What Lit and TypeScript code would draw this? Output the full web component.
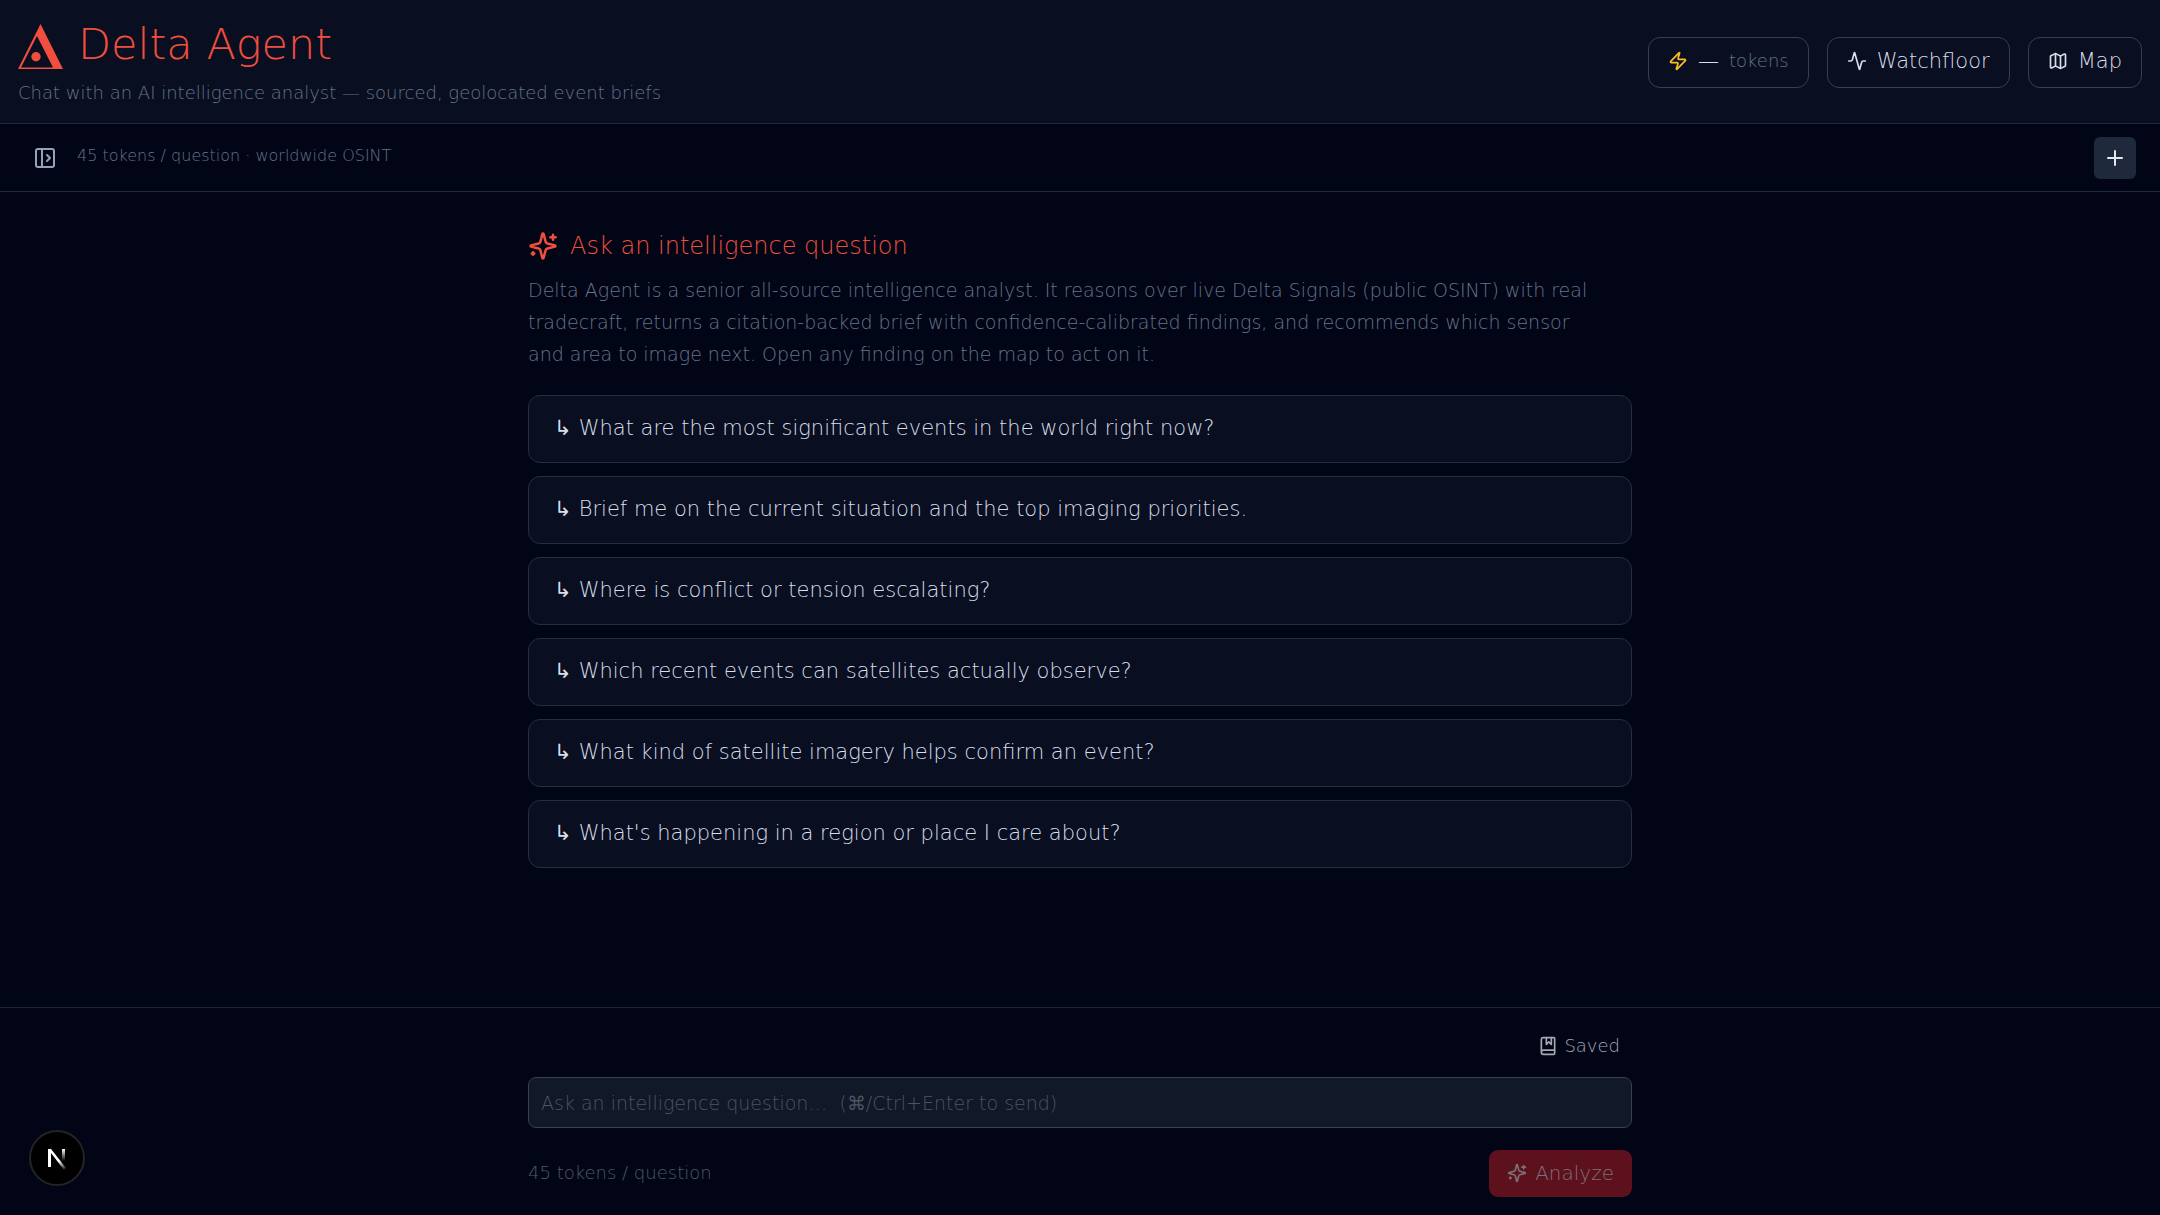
import { LitElement, html, css, svg } from "lit";
import { customElement } from "lit/decorators.js";

const ICONS = {
  zap: svg`<path d="M4 14a1 1 0 0 1-.78-1.63l9.9-10.2a.5.5 0 0 1 .86.46l-1.92 6.02A1 1 0 0 0 13 10h7a1 1 0 0 1 .78 1.63l-9.9 10.2a.5.5 0 0 1-.86-.46l1.92-6.02A1 1 0 0 0 11 14z"/>`,
  activity: svg`<path d="M22 12h-2.48a2 2 0 0 0-1.93 1.46l-2.35 8.36a.25.25 0 0 1-.48 0L9.24 2.18a.25.25 0 0 0-.48 0l-2.35 8.36A2 2 0 0 1 4.49 12H2"/>`,
  map: svg`<path d="M14.106 5.553a2 2 0 0 0 1.788 0l3.659-1.83A1 1 0 0 1 21 4.619v12.764a1 1 0 0 1-.553.894l-4.553 2.277a2 2 0 0 1-1.788 0l-4.212-2.106a2 2 0 0 0-1.788 0l-3.659 1.83A1 1 0 0 1 3 19.381V6.618a1 1 0 0 1 .553-.894l4.553-2.277a2 2 0 0 1 1.788 0z"/><path d="M15 5.764v15"/><path d="M9 3.236v15"/>`,
  panel: svg`<rect width="18" height="18" x="3" y="3" rx="2"/><path d="M9 3v18"/><path d="m14 9 3 3-3 3"/>`,
  plus: svg`<path d="M5 12h14"/><path d="M12 5v14"/>`,
  sparkles: svg`<path d="M9.937 15.5A2 2 0 0 0 8.5 14.063l-6.135-1.582a.5.5 0 0 1 0-.962L8.5 9.936A2 2 0 0 0 9.937 8.5l1.582-6.135a.5.5 0 0 1 .963 0L14.063 8.5A2 2 0 0 0 15.5 9.937l6.135 1.581a.5.5 0 0 1 0 .964L15.5 14.063a2 2 0 0 0-1.437 1.437l-1.582 6.135a.5.5 0 0 1-.963 0z"/><path d="M20 3v4"/><path d="M22 5h-4"/><path d="M4 17v2"/><path d="M5 18H3"/>`,
  book: svg`<path d="M10 2v8l3-3 3 3V2"/><path d="M4 19.5v-15A2.5 2.5 0 0 1 6.5 2H19a1 1 0 0 1 1 1v18a1 1 0 0 1-1 1H6.5a1 1 0 0 1 0-5H20"/>`,
};

const icon = (name: keyof typeof ICONS, size = "") => html`<svg
  class="icon ${size}" viewBox="0 0 24 24" fill="none" stroke="currentColor"
  stroke-width="2" stroke-linecap="round" stroke-linejoin="round" aria-hidden="true"
>${ICONS[name]}</svg>`;

const QUESTIONS = [
  "What are the most significant events in the world right now?",
  "Brief me on the current situation and the top imaging priorities.",
  "Where is conflict or tension escalating?",
  "Which recent events can satellites actually observe?",
  "What kind of satellite imagery helps confirm an event?",
  "What's happening in a region or place I care about?",
];

@customElement("app-root")
export class AppRoot extends LitElement {
  static styles = css`
    :host {
      display: flex;
      flex-direction: column;
      min-height: 100vh;
      background: #020516;
      color: #d7dfea;
      font: 200 21px/28px "DejaVu Sans", sans-serif;
    }
    *, *::before, *::after { box-sizing: border-box; }
    h1, h2, p, ul { margin: 0; padding: 0; font-weight: inherit; }
    ul { list-style: none; }
    button, input { font: inherit; color: inherit; }
    button { cursor: pointer; }
    a { color: inherit; text-decoration: none; }
    .icon { width: 20px; height: 20px; flex: none; }
    .icon.md { width: 24px; height: 24px; }
    .icon.lg { width: 30px; height: 30px; }

    .header {
      display: flex;
      align-items: center;
      justify-content: space-between;
      padding: 17px 18px 16px;
      background: #090e20;
      border-bottom: 1px solid #1e293b;
    }
    .brand { display: flex; align-items: center; gap: 15px; color: #f04e3e; }
    .brand h1 { font-size: 43px; line-height: 54px; }
    .logo { width: 45px; height: 45px; margin-top: 4px; }
    .tagline { margin-top: 8px; color: #64748b; font-size: 18px; }
    .actions { display: flex; align-items: center; gap: 18px; }
    .pill {
      display: flex;
      align-items: center;
      gap: 10px;
      height: 51px;
      padding: 0 19px 2px;
      border: 1px solid #334155;
      border-radius: 12px;
    }
    .zap { color: #fbbf24; display: flex; }
    .unit { color: #64748b; font-size: 18px; }

    .toolbar {
      display: flex;
      align-items: center;
      gap: 20px;
      height: 68px;
      padding: 0 24px 0 33px;
      border-bottom: 1px solid #1e293b;
    }
    .ghost { display: flex; padding: 0; border: 0; background: none; color: #94a3b8; }
    .cost { flex: 1; padding-bottom: 3px; color: #64748b; font-size: 16px; }
    .add {
      display: grid;
      place-items: center;
      width: 42px;
      height: 42px;
      padding: 0;
      border: 0;
      border-radius: 6px;
      background: #1e293b;
      color: #e2e8f0;
    }

    .main { flex: 1; padding: 36px 24px; }
    .column { width: 100%; max-width: 1104px; margin: 0 auto; }
    .title { display: flex; align-items: center; gap: 12px; color: #f04e3e; }
    .title h2 { font-size: 24px; line-height: 36px; }
    .intro { max-width: 1072px; margin-top: 10px; color: #64748b; font-size: 19px; line-height: 32px; }
    .questions { display: grid; gap: 13px; margin-top: 25px; }
    .question {
      display: block;
      width: 100%;
      height: 68px;
      padding: 0 25px 2px;
      border: 1px solid #232e40;
      border-radius: 12px;
      background: #090e20;
      text-align: left;
    }

    .footer { padding: 18px 24px; border-top: 1px solid #1d2432; }
    .composer { display: flex; flex-direction: column; }
    .saved {
      display: flex;
      align-items: center;
      align-self: flex-end;
      gap: 6px;
      height: 40px;
      padding: 0 12px;
      border: 0;
      background: none;
      color: #a3a8b1;
      font-size: 18px;
    }
    .ask {
      width: 100%;
      height: 51px;
      margin-top: 11px;
      padding: 0 12px;
      border: 1px solid #374151;
      border-radius: 8px;
      background: #111827;
      font-size: 19px;
    }
    .ask::placeholder { color: #4b5563; opacity: 1; }
    .submit { display: flex; align-items: center; justify-content: space-between; margin-top: 22px; }
    .note { padding-bottom: 2px; color: #4f5968; font-size: 18px; }
    .analyze {
      display: flex;
      align-items: center;
      gap: 8px;
      height: 47px;
      padding: 0 18px 2px;
      border: 0;
      border-radius: 9px;
      background: #5c111c;
      color: #7c7079;
      font-size: 20px;
    }

    .badge {
      position: fixed;
      left: 29px;
      bottom: 29px;
      width: 56px;
      height: 56px;
      padding: 0;
      border: 2px solid #242424;
      border-radius: 50%;
      background: #000;
    }
    .badge svg { display: block; width: 100%; height: 100%; }
  `;

  render() {
    return html`
      <header class="header">
        <div>
          <div class="brand">
            <svg class="logo" viewBox="0 0 45 45" aria-hidden="true">
              <path fill="currentColor" fill-rule="evenodd" d="M22.5 0 45 45H0ZM19 12 3 43.4H35Z"/>
              <circle cx="18" cy="32.7" r="4.7" fill="currentColor"/>
            </svg>
            <h1>Delta Agent</h1>
          </div>
          <p class="tagline">Chat with an AI intelligence analyst — sourced, geolocated event briefs</p>
        </div>
        <nav class="actions">
          <a class="pill" href="#tokens"><span class="zap">${icon("zap")}</span><span>—</span><span class="unit">tokens</span></a>
          <a class="pill" href="#watchfloor">${icon("activity")}<span>Watchfloor</span></a>
          <a class="pill" href="#map">${icon("map")}<span>Map</span></a>
        </nav>
      </header>
      <div class="toolbar">
        <button class="ghost" aria-label="Open history">${icon("panel", "md")}</button>
        <p class="cost">45 tokens / question · worldwide OSINT</p>
        <button class="add" aria-label="New chat">${icon("plus", "md")}</button>
      </div>
      <main class="main">
        <section class="column">
          <div class="title">${icon("sparkles", "lg")}<h2>Ask an intelligence question</h2></div>
          <p class="intro">
            Delta Agent is a senior all-source intelligence analyst. It reasons over live Delta Signals (public OSINT)
            with real tradecraft, returns a citation-backed brief with confidence-calibrated findings, and recommends
            which sensor and area to image next. Open any finding on the map to act on it.
          </p>
          <ul class="questions">
            ${QUESTIONS.map((q) => html`<li><button class="question">↳ ${q}</button></li>`)}
          </ul>
        </section>
      </main>
      <footer class="footer">
        <form class="column composer" @submit=${(e: Event) => e.preventDefault()}>
          <button class="saved" type="button">${icon("book")}Saved</button>
          <input class="ask" aria-label="Intelligence question" placeholder="Ask an intelligence question…  (⌘/Ctrl+Enter to send)" />
          <div class="submit">
            <p class="note">45 tokens / question</p>
            <button class="analyze" type="submit">${icon("sparkles")}Analyze</button>
          </div>
        </form>
      </footer>
      <button class="badge" aria-label="Developer tools">
        <svg viewBox="0 0 52 52" fill="none" aria-hidden="true">
          <defs>
            <linearGradient id="stem" x1="0" y1="17" x2="0" y2="29" gradientUnits="userSpaceOnUse">
              <stop stop-color="#fff"/><stop offset="1" stop-color="#fff" stop-opacity="0"/>
            </linearGradient>
            <linearGradient id="slash" x1="28" y1="29" x2="35" y2="38" gradientUnits="userSpaceOnUse">
              <stop stop-color="#fff"/><stop offset="1" stop-color="#fff" stop-opacity="0"/>
            </linearGradient>
          </defs>
          <path d="M17 17h3v18h-3z" fill="#fff"/>
          <path d="M17 17h3l15 19-2 2z" fill="url(#slash)"/>
          <path d="M31 17h3v13h-3z" fill="url(#stem)"/>
        </svg>
      </button>
    `;
  }
}
